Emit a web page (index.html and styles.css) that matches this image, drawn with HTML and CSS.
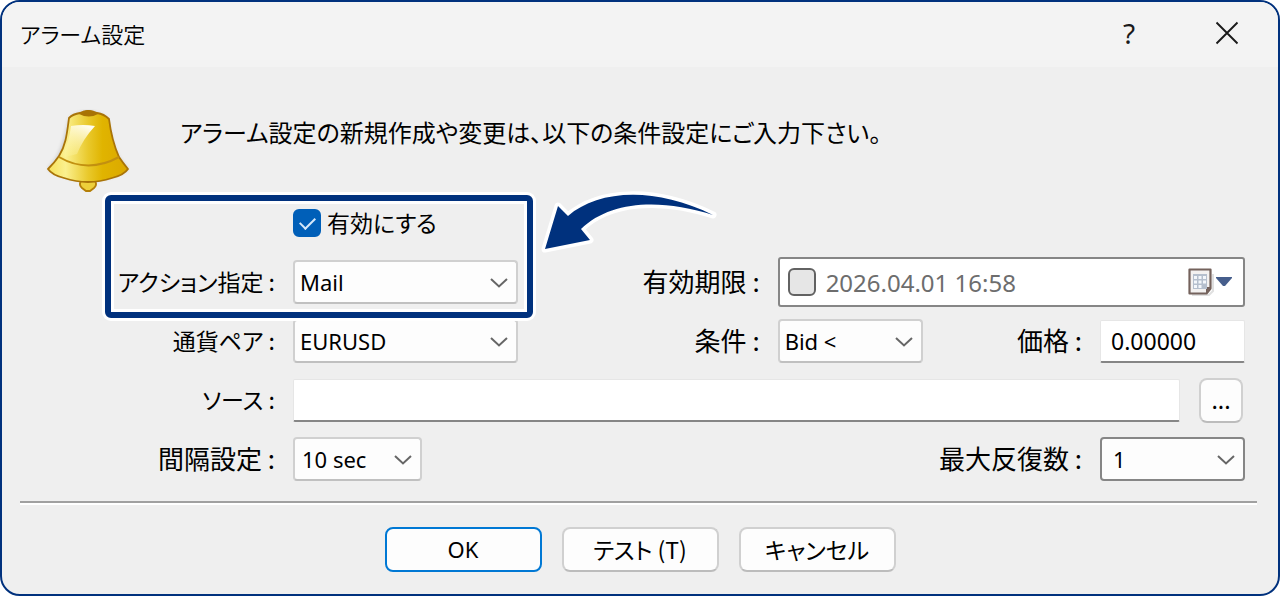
FILE: index.html
```html
<!DOCTYPE html>
<html lang="ja">
<head>
<meta charset="utf-8">
<meta name="viewport" content="width=device-width, initial-scale=1">
<title>アラーム設定</title>
<link rel="stylesheet" href="styles.css">
</head>
<body>
<main class="dialog">
  <header class="titlebar">
    <h1 class="title">アラーム設定</h1>
    <button class="caption-button help" type="button" aria-label="ヘルプ">?</button>
    <button class="caption-button" type="button" aria-label="閉じる">
      <svg width="24" height="24" viewBox="0 0 24 24" aria-hidden="true"><path d="M1.5 1.5 22.5 22.5M22.5 1.5 1.5 22.5" fill="none" stroke="#1a1a1a" stroke-width="1.9"/></svg>
    </button>
  </header>

  <section class="intro">
    <svg class="bell" width="84" height="86" viewBox="0 0 84 86" aria-hidden="true">
      <defs>
        <linearGradient id="gold" x1="0" x2="1"><stop offset="0" stop-color="#f6e15a"/><stop offset=".22" stop-color="#fbf08e"/><stop offset=".5" stop-color="#e9c92c"/><stop offset=".68" stop-color="#e0b400"/><stop offset="1" stop-color="#dba800"/></linearGradient>
        <linearGradient id="shine" x1=".7" y1="0" x2=".2" y2="1"><stop offset="0" stop-color="#fffdf0"/><stop offset="1" stop-color="#fff7a8" stop-opacity=".2"/></linearGradient>
        <filter id="soft" x="-20%" y="-20%" width="140%" height="140%"><feGaussianBlur stdDeviation="2"/></filter>
      </defs>
      <path d="M24 9Q42-4 60 9C66 30 66 45 82 60Q44 82 2 60C17 45 18 30 24 9Z" fill="#000" opacity=".2" filter="url(#soft)"/>
      <path d="M35 72a7 6 0 0 0 1 7l4 3h4l4-3a7 6 0 0 0 1-7Z" fill="#edcf3a" stroke="#b47f08" stroke-width="1.8"/>
      <path d="M23 9Q27 5 34 4Q42 0 51 4Q58 5 63 10C65 26 69 39 73 48Q77 54 82 60Q78 66 66 69Q42 77 18 69Q6 66 2 60Q9 53 13 47C20 36 21 24 23 9Z" fill="url(#gold)" stroke="#a97408" stroke-width="1.8" stroke-linejoin="round"/>
      <path d="M25 17q12-2 24 0Q37 30 31 45l-12 3q-2 0-2-3 6-12 8-28Z" fill="url(#shine)"/>
      <path d="M13 48Q42 65 73 48" fill="none" stroke="#c29010" stroke-width="2"/>
      <path d="M33 5q2-2 5-2 1-2 4-2 4 0 5 2 3 0 5 2-9 5-19 0Z" fill="#a87304"/>
    </svg>
    <p class="message">アラーム設定の新規作成や変更は、以下の条件設定にご入力下さい。</p>
  </section>

  <form class="form">
    <div class="enable">
      <input class="check" id="enabled" type="checkbox" checked>
      <label class="label kana" for="enabled">有効にする</label>
    </div>

    <label class="label col-1 row-2 kana" for="action">アクション指定 :</label>
    <div class="select col-2 row-2">
      <select id="action"><option>Mail</option></select>
      <svg class="chevron" viewBox="0 0 20 12" aria-hidden="true"><path d="M2 2 10 9.5 18 2"/></svg>
    </div>
    <label class="label col-3 row-2" for="expiry">有効期限 :</label>
    <div class="date row-2">
      <input class="check" type="checkbox" aria-label="有効期限を使用">
      <input class="date-text" id="expiry" type="text" value="2026.04.01 16:58">
      <button class="calendar" type="button" aria-label="カレンダー">
        <svg width="46" height="32" viewBox="0 0 46 32" aria-hidden="true">
          <path d="M5 29h17l4-4V8" fill="none" stroke="#000" stroke-opacity=".12" stroke-width="2"/>
          <path d="M2.500 3.500h21v19l-4 5h-17Z" fill="#f3f1f0" stroke="#74625c" stroke-width="2.200" stroke-linejoin="round"/>
          <path d="M24 21h-5v6Z" fill="#74625c"/>
          <path d="M6 8h14v15H6Z" fill="#b5bfcd"/>
          <path d="M7 10h3v3H7Zm4.500 0h3v3h-3Zm4.500 0h3v3h-3ZM7 14.500h3v3H7Zm4.500 0h3v3h-3Zm4.500 0h3v3h-3ZM7 19h3v3H7Zm4.500 0h3v3h-3Z" fill="#f4f7fb"/>
          <path d="M29 11h16v1l-7 8h-2l-7-8Z" fill="#465e8c"/>
        </svg>
      </button>
    </div>

    <label class="label col-1 row-3 kana" for="pair">通貨ペア :</label>
    <div class="select col-2 row-3">
      <select id="pair"><option>EURUSD</option></select>
      <svg class="chevron" viewBox="0 0 20 12" aria-hidden="true"><path d="M2 2 10 9.5 18 2"/></svg>
    </div>
    <label class="label col-3 row-3" for="condition">条件 :</label>
    <div class="select col-4 row-3">
      <select id="condition"><option>Bid &lt;</option></select>
      <svg class="chevron" viewBox="0 0 20 12" aria-hidden="true"><path d="M2 2 10 9.5 18 2"/></svg>
    </div>
    <label class="label col-5 row-3" for="price">価格 :</label>
    <input class="text col-6 row-3" id="price" type="text" value="0.00000">

    <label class="label col-1 row-4 kana" for="source">ソース :</label>
    <div class="source">
      <input class="text" id="source" type="text">
      <button class="button browse" type="button">...</button>
    </div>

    <label class="label col-1 row-5" for="interval">間隔設定 :</label>
    <div class="select short col-2 row-5">
      <select id="interval"><option>10 sec</option></select>
      <svg class="chevron" viewBox="0 0 20 12" aria-hidden="true"><path d="M2 2 10 9.5 18 2"/></svg>
    </div>
    <label class="label wide row-5" for="repeat">最大反復数 :</label>
    <div class="select strong col-6 row-5">
      <select id="repeat"><option>1</option></select>
      <svg class="chevron" viewBox="0 0 20 12" aria-hidden="true"><path d="M2 2 10 9.5 18 2"/></svg>
    </div>

    <div class="highlight">
      <svg class="arrow" width="190" height="72" viewBox="0 0 190 72" aria-hidden="true">
        <path d="M15 64 28 21 38 31C68 5 124 1 183 30C130 13 80 16 51 44L60 55Z"/>
      </svg>
    </div>
  </form>

  <footer class="actions">
    <button class="button default" type="button">OK</button>
    <button class="button" type="button">テスト (T)</button>
    <button class="button" type="button">キャンセル</button>
  </footer>
</main>
</body>
</html>
```
FILE: styles.css
```css
* { box-sizing: border-box; }

body {
  margin: 0;
  background: #fff;
  color: #000;
  font-family: "Noto Sans CJK JP", "Noto Sans", sans-serif;
  font-size: 26px;
  font-feature-settings: "palt";
}

.dialog {
  min-height: 100vh;
  border: 2px solid #00317d;
  border-radius: 20px;
  background: #efefef;
  overflow: hidden;
}

.titlebar {
  display: flex;
  align-items: center;
  gap: 64px;
  height: 65px;
  padding: 0 39px 4px 18px;
  background: #f3f3f3;
}

.title {
  flex: 1;
  margin: 0;
  font-size: 22px;
  font-weight: 350;
}

.caption-button {
  display: flex;
  justify-content: center;
  width: 44px;
  margin-right: -10px;
  padding: 0;
  border: 0;
  background: none;
  color: #1a1a1a;
}

.help { font: 28px/40px "Noto Sans", sans-serif; }

.intro {
  display: flex;
  align-items: flex-start;
  gap: 50px;
  padding: 42px 33px 6px 44px;
}

.bell { flex: none; }

.message {
  margin: 0;
  font-size: 24px;
  line-height: 46px;
}

.form {
  display: grid;
  grid-template-columns: 255px 225px 231fr 145px 146fr 145px;
  grid-auto-rows: 44px;
  gap: 15px 18px;
  align-items: center;
  margin: 0 21px 0 18px;
  padding: 0 12px 20px 0;
  border-bottom: 2px solid #a0a0a0;
  box-shadow: 0 2px #fff;
}

.col-1 { grid-column: 1; }
.col-2 { grid-column: 2; }
.col-3 { grid-column: 3; }
.col-4 { grid-column: 4; }
.col-5 { grid-column: 5; }
.col-6 { grid-column: 6; }
.wide { grid-column: 3 / 6; }

.row-2 { grid-row: 2; }
.row-3 { grid-row: 3; }
.row-4 { grid-row: 4; }
.row-5 { grid-row: 5; }

.enable {
  grid-area: 1 / 2 / 2 / -1;
  display: flex;
  align-items: center;
  gap: 6px;
}

.label {
  padding-bottom: 3px;
  text-align: right;
  white-space: nowrap;
}

.kana { font-size: 23px; }

.check {
  appearance: none;
  flex: none;
  width: 28px;
  height: 28px;
  margin: 0;
  border: 2px solid #626262;
  border-radius: 6px;
  background: #e6e6e6;
}

.check:checked {
  display: grid;
  place-items: center;
  border-color: #005fb8;
  background: #005fb8;
}

.check:checked::after {
  content: "";
  width: 13px;
  height: 7px;
  margin-bottom: 4px;
  border: solid #d5e8fa;
  border-width: 0 0 2px 2px;
  transform: rotate(-45deg);
}

.select { position: relative; }

.select select {
  display: block;
  appearance: none;
  width: 100%;
  height: 44px;
  padding: 0 40px 0 5px;
  border: 2px solid #d0d0d0;
  border-bottom-color: #c0c0c0;
  border-radius: 4px;
  background: #fdfdfd;
  color: #000;
  font: 22px "Noto Sans", sans-serif;
}

.short { width: 129px; }
.short select { padding-left: 7px; }

.strong select {
  padding-left: 11px;
  border-color: #868686;
}

.chevron {
  position: absolute;
  top: 17px;
  right: 9px;
  width: 20px;
  height: 12px;
  fill: none;
  stroke: #666;
  stroke-width: 2;
  pointer-events: none;
}

.date {
  grid-column: 4 / -1;
  display: flex;
  align-items: center;
  gap: 10px;
  height: 50px;
  margin: -3px 0;
  padding: 0 10px 0 8px;
  border: 2px solid #868686;
  border-radius: 3px;
  background: #fff;
}

.date-text {
  flex: 1;
  min-width: 0;
  padding: 0;
  border: 0;
  background: none;
  color: #6d6d6d;
  font: 24px "Noto Sans", sans-serif;
}

.calendar {
  display: flex;
  padding: 0;
  border: 0;
  background: none;
}

.text {
  width: 100%;
  min-width: 0;
  height: 43px;
  padding: 0 10px;
  border: 1px solid #e6e6e6;
  border-bottom: 2px solid #868686;
  border-radius: 2px;
  background: #fff;
  color: #000;
  font: 23px "Noto Sans", sans-serif;
}

.source {
  grid-area: 4 / 2 / 5 / -1;
  display: flex;
  align-items: center;
  gap: 19px;
  padding-right: 2px;
}

.highlight {
  position: relative;
  grid-area: 1 / 1 / 3 / 3;
  align-self: stretch;
  margin: -6px -15px -14px 85px;
  border: 6px solid #00317d;
  border-radius: 6px;
  box-shadow: 0 0 0 3px #fff, inset 0 0 0 3px #fff;
  pointer-events: none;
}

.arrow {
  position: absolute;
  top: -16px;
  left: 100%;
  margin-left: 3px;
}

.arrow path {
  fill: #00317d;
  stroke: #fff;
  stroke-width: 7;
  stroke-linejoin: round;
  paint-order: stroke;
}

.actions {
  display: flex;
  justify-content: center;
  gap: 20px;
  padding: 24px 0 22px;
}

.button {
  width: 157px;
  height: 45px;
  padding: 0 0 2px;
  border: 2px solid #d0d0d0;
  border-bottom-color: #bcbcbc;
  border-radius: 8px;
  background: #fdfdfd;
  color: #000;
  font: 23px "Noto Sans CJK JP", sans-serif;
  font-feature-settings: "palt";
}

.default {
  border-color: #0078d4;
  font: 22px "Noto Sans", sans-serif;
}

.browse {
  flex: none;
  width: 44px;
}
```
